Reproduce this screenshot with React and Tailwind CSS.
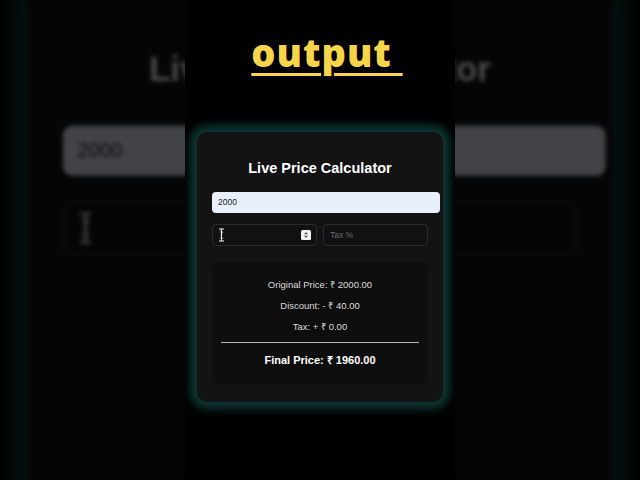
import React from "react";

function Spinner() {
  return (
    <svg width="10" height="10" viewBox="0 0 10 10" className="shrink-0">
      <rect x="0" y="0" width="10" height="10" rx="1.5" fill="#f2f2f2" />
      <path d="M3 4.2 L5 2 L7 4.2 Z" fill="#555" />
      <path d="M3 5.8 L5 8 L7 5.8 Z" fill="#555" />
    </svg>
  );
}

function Cursor() {
  return (
    <svg width="7" height="14" viewBox="0 0 7 14" className="shrink-0">
      <path d="M1.5 4 H5 L2.5 7.5 M1.5 10 H5.5" stroke="#aaa" strokeWidth="0.8" fill="none" />
      <path d="M1 1 H6 M3.5 1 V13 M1 13 H6" stroke="#f5f5f5" strokeWidth="1" fill="none" />
    </svg>
  );
}

function Page({ heading }) {
  return (
    <div className="w-[270px] h-[480px] bg-black flex flex-col items-center overflow-hidden">
      <div className="h-[122px] w-full flex justify-center pt-[28px] pl-[14px]">
        {heading ? (
          <span
            className="text-[38px] leading-[48px] font-extrabold tracking-[1px] text-[#f6d54b] underline decoration-[3px] underline-offset-[6px]"
            style={{ fontFamily: '"Open Sans", sans-serif' }}
          >
            output&nbsp;
          </span>
        ) : null}
      </div>
      <div
        className="w-[246px] h-[270px] mt-[10px] bg-[#131313] rounded-[10px] shadow-[0_0_8px_7px_#0c3633] flex flex-col px-[15px] pt-[28px]"
        style={{ fontFamily: '"Liberation Sans", Arial, sans-serif' }}
      >
        <div className="text-[14.5px] leading-[17px] font-bold text-white text-center">
          Live Price Calculator
        </div>
        <div className="mt-[15px] w-[228px] h-[21px] bg-[#e8f0fe] rounded-[4px] flex items-center pl-[6px] text-[8.5px] text-[#222]">
          2000
        </div>
        <div className="mt-[11px] w-[216px] flex gap-[6px]">
          <div className="w-[105px] h-[22px] border border-[#2a2a2a] rounded-[4px] bg-[#111] flex items-center justify-between pl-[5px] pr-[5px]">
            <Cursor />
            <Spinner />
          </div>
          <div className="w-[105px] h-[22px] border border-[#2a2a2a] rounded-[4px] bg-[#111] flex items-center pl-[6px] text-[8.5px] text-[#6b6b6b]">
            Tax %
          </div>
        </div>
        <div className="mt-[16px] w-[216px] h-[122px] bg-[#0e0e0e] rounded-[6px] flex flex-col items-center pt-[13px] px-[9px]">
          <div className="h-[21px] flex items-center text-[9.5px] text-[#dcdcdc]">Original Price: ₹ 2000.00</div>
          <div className="h-[21px] flex items-center text-[9.5px] text-[#dcdcdc]">Discount: - ₹ 40.00</div>
          <div className="h-[21px] flex items-center text-[9.5px] text-[#dcdcdc]">Tax: + ₹ 0.00</div>
          <div className="w-full h-px bg-[#b5b5b5] mt-[4px]" />
          <div className="mt-[11px] text-[11px] leading-[13px] font-bold text-white">Final Price: ₹ 1960.00</div>
        </div>
      </div>
    </div>
  );
}

export default function App() {
  return (
    <div className="relative w-[640px] h-[480px] bg-black overflow-hidden">
      <div aria-hidden="true" className="absolute inset-0 flex justify-center scale-[2.38] brightness-[0.28] blur-[1px]">
        <Page heading={false} />
      </div>
      <div className="relative flex justify-center">
        <Page heading={true} />
      </div>
    </div>
  );
}
